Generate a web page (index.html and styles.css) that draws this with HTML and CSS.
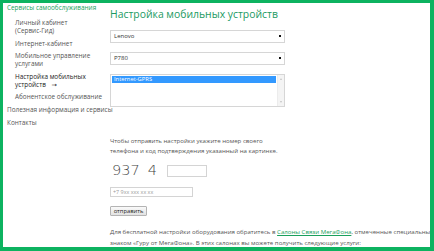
FILE: index.html
```html
<!DOCTYPE html>
<html lang="ru">

<head>
    <meta charset="UTF-8">
    <title>Настройка мобильных устройств</title>
    <link rel="stylesheet" href="styles.css">
</head>

<body>
    <div class="frame">
        <!-- Left menu -->
        <div class="sidebar">
            <div class="menu-head">Сервисы самообслуживания</div>
            <ul class="submenu">
                <li>Личный кабинет<br>(Сервис-Гид)</li>
                <li>Интернет-кабинет</li>
                <li>Мобильное управление<br>услугами</li>
                <li class="active">Настройка мобильных<br>устройств <span class="arrow">&#8594;</span></li>
                <li>Абонентское обслуживание</li>
            </ul>
            <div class="menu-top">Полезная информация и сервисы</div>
            <div class="menu-top">Контакты</div>
        </div>

        <!-- Main content -->
        <div class="content">
            <h1 class="title">Настройка мобильных устройств</h1>

            <div class="dropdown">Lenovo</div>
            <div class="dropdown">P780</div>

            <div class="listbox">
                <div class="options">
                    <div class="option selected">Internet-GPRS</div>
                </div>
                <div class="scrollbar">
                    <span class="scroll-up"></span>
                    <span class="scroll-down"></span>
                </div>
            </div>

            <p class="hint">Чтобы отправить настройки укажите номер своего<br>телефона и код подтверждения указанный на картинке.</p>

            <div class="captcha-row">
                <div class="captcha">937<span class="last">4</span></div>
                <input class="code-input" type="text">
            </div>

            <input class="phone-input" type="text" placeholder="+7 9xx xxx xx xx">

            <button class="send-button">отправить</button>

            <p class="note">Для бесплатной настройки оборудования обратитесь в <a href="#">Салоны Связи МегаФона</a>, отмеченные специальным<br>знаком «Гуру от МегаФона». В этих салонах вы можете получить следующие услуги:</p>
        </div>
    </div>
</body>

</html>
```

FILE: styles.css
```css
/* Page */
html,
body {
    margin: 0;
    padding: 0;
    background: #fff;
}

body {
    font-family: "Open Sans", "DejaVu Sans", sans-serif;
    color: #555;
}

/* Green frame round the whole page */
.frame {
    box-sizing: border-box;
    width: 434px;
    height: 251px;
    border: 3px solid #0db360;
    border-right-width: 4px;
    border-bottom-width: 4px;
    display: flex;
    overflow: hidden;
}

/* Left menu */
.sidebar {
    box-sizing: border-box;
    width: 103px;
    flex-shrink: 0;
    padding: 1px 0 0 4px;
    font-size: 6.4px;
    line-height: 8px;
    color: #555;
    white-space: nowrap;
}

.menu-head {
    color: #1aa05c;
}

.submenu {
    list-style: none;
    margin: 7px 0 4px 0;
    padding: 0 0 0 8px;
}

.submenu li {
    margin-bottom: 4.5px;
}

.submenu li.active {
    color: #222;
}

.arrow {
    margin-left: 4px;
}

.menu-top {
    margin-bottom: 5px;
}

/* Main column */
.content {
    padding: 3px 0 0 4px;
    width: 320px;
    font-size: 6.1px;
}

.title {
    margin: 0 0 7px 0;
    font-weight: normal;
    font-size: 10.4px;
    line-height: 17px;
    color: #1b9a62;
}

.dropdown {
    position: relative;
    box-sizing: border-box;
    width: 175px;
    height: 13px;
    border: 1px solid #d6d6d6;
    padding: 0 0 0 3px;
    margin-bottom: 9px;
    font-size: 6px;
    line-height: 11px;
    color: #333;
}

/* small arrow of the select */
.dropdown::after {
    content: "";
    position: absolute;
    right: 3px;
    top: 4px;
    width: 2px;
    height: 2px;
    background: #111;
}

.listbox {
    box-sizing: border-box;
    width: 175px;
    height: 33px;
    border: 1px solid #d6d6d6;
    display: flex;
}

.options {
    flex: 1;
    padding: 1px 1px 0 1px;
}

.option {
    font-size: 5.8px;
    line-height: 7px;
    padding-left: 2px;
}

.option.selected {
    background: #3399ff;
    color: #fff;
}

.scrollbar {
    width: 6px;
    display: flex;
    flex-direction: column;
    justify-content: space-between;
    align-items: center;
    padding: 3px 0;
    background: #f4f4f4;
    border-left: 1px solid #ececec;
}

.scroll-up,
.scroll-down {
    width: 0;
    height: 0;
    border-left: 1.5px solid transparent;
    border-right: 1.5px solid transparent;
}

.scroll-up {
    border-bottom: 2px solid #c4c4c4;
}

.scroll-down {
    border-top: 2px solid #c4c4c4;
}

.hint {
    margin: 29px 0 0 0;
    line-height: 10px;
    color: #555;
}

.captcha-row {
    display: flex;
    align-items: center;
    margin-top: 3px;
    height: 22px;
}

.captcha {
    font-family: "DejaVu Sans", sans-serif;
    font-size: 14.5px;
    font-weight: 200;
    color: #444;
    padding-left: 2px;
    width: 55px;
    white-space: nowrap;
}

.captcha .last {
    margin-left: 8px;
}

.code-input {
    box-sizing: border-box;
    width: 40px;
    height: 12px;
    border: 1px solid #d4d4d4;
    margin: 2px 0 0 0;
    padding: 0;
}

.phone-input {
    display: block;
    box-sizing: border-box;
    width: 83px;
    height: 10px;
    margin-top: 6px;
    border: 1px solid #d4d4d4;
    padding: 0 0 0 2px;
    font-family: "Open Sans", "DejaVu Sans", sans-serif;
    font-size: 5.4px;
}

.phone-input::placeholder {
    color: #9a9a9a;
}

.send-button {
    display: block;
    box-sizing: border-box;
    height: 10px;
    width: 37px;
    margin-top: 9px;
    padding: 0;
    border: 1px solid #b4b4b4;
    border-radius: 1px;
    background: linear-gradient(#fafafa, #e2e2e2);
    font-family: "Open Sans", "DejaVu Sans", sans-serif;
    font-size: 5.8px;
    line-height: 8px;
    color: #222;
}

.note {
    margin: 10px 0 0 0;
    line-height: 11px;
    font-size: 6.1px;
    color: #555;
    white-space: nowrap;
}

.note a {
    color: #1aa05c;
}
```
